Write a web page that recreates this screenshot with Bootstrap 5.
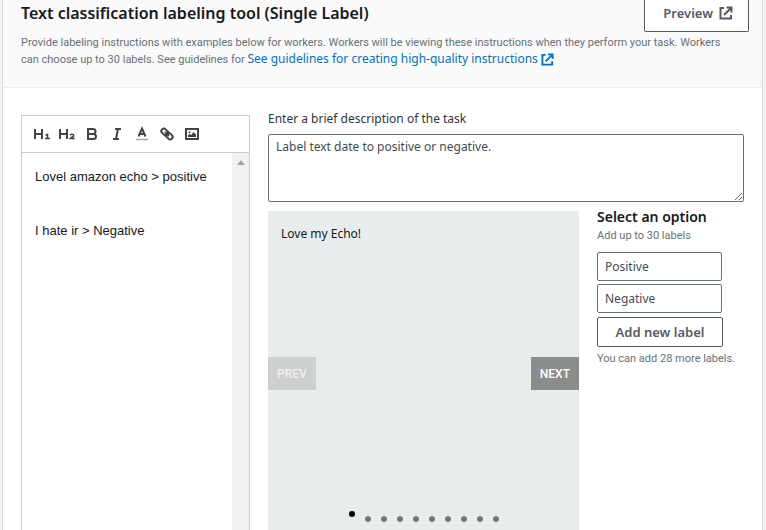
<!DOCTYPE html>
<html lang="en">
<head>
<meta charset="utf-8">
<meta name="viewport" content="width=device-width, initial-scale=1">
<title>Text classification labeling tool</title>
<link href="https://cdn.jsdelivr.net/npm/bootstrap@5.3.0/dist/css/bootstrap.min.css" rel="stylesheet">
<style>
  body { background: #f2f3f3; color: #16191f; font: 400 12px/18px "Noto Sans", sans-serif; }
  .panel { margin: 0 3px 0 2px; border: solid #d5dbdb; border-width: 0 1px; }
  .panel-head { background: #fafafa; border-bottom: 1px solid #eaeded; padding: 0 18px 19px; }
  .panel-head h1 { font-size: 16px; line-height: 24px; font-weight: 600; margin: 1px 0 9px; }
  .fine { font: 400 11px/17px Roboto, sans-serif; color: #687078; }
  .head-note { padding-right: 16px; }
  .head-note a { font: 400 12px/16px "Noto Sans", sans-serif; color: #0073bb; text-decoration: none; }
  .btn-outline { --bs-btn-color: #545b64; --bs-btn-border-color: #545b64; --bs-btn-bg: #fff; --bs-btn-hover-color: #16191f; --bs-btn-hover-border-color: #16191f; --bs-btn-hover-bg: #fafafa; --bs-btn-font-size: 13px; --bs-btn-font-weight: 600; --bs-btn-line-height: 18px; --bs-btn-border-radius: 2px; --bs-btn-padding-y: 5px; }
  .btn-preview { border-top: 0; margin-right: -5px; padding: 4px 15px 9px 18px; gap: 6px; border-radius: 0 0 2px 2px; }
  .panel-body { padding: 27px 18px 0; gap: 18px; }
  .editor { width: 229px; border: 1px solid #ccc; border-bottom: 0; }
  .tools { height: 37px; border-bottom: 1px solid #ccc; padding: 0 7px; }
  .tools button { width: 25px; height: 24px; padding: 3px; border: 0; background: none; color: #444; display: block; }
  .tools svg { display: block; margin: auto; }
  .doc { font: 400 13px/18px "Liberation Sans", Arial, sans-serif; padding: 15px 13px; color: #16191f; }
  .scroller { width: 17px; background: #f0f0f0; padding-top: 7px; }
  .task-label { line-height: 18px; margin-bottom: 6px; margin-top: -5px; color: #30353c; }
  .field { border: 1px solid #687078; border-radius: 2px; color: #444b52; background: #fff; font-size: 12px; line-height: 18px; padding: 3px 7px; display: block; width: 100%; }
  textarea.field { height: 68px; resize: vertical; }
  .labeling { margin-top: 9px; gap: 18px; }
  .slides { background: #e9eced; flex: 0 1 311px; padding-bottom: 8px; }
  .slides p { margin: 14px 13px 114px; color: #16191f; }
  .step { border: 0; border-radius: 0; background: #8b8d8d; color: #fff; font: 500 12px/18px Roboto, sans-serif; padding: 8px 9px 7px; }
  .step:disabled { background: #cecfcf; color: #eff0f0; }
  .dots { gap: 10px; }
  .dot { width: 6px; height: 6px; padding: 0; border: 0; border-radius: 50%; background: #757777; }
  .dot.active { background: #000; margin-bottom: 5px; }
  .options h2 { font-size: 14px; line-height: 18px; font-weight: 600; margin: -3px 0 1px; }
  .options .field { width: 125px; height: 29px; margin-bottom: 3px; }
  .btn-add { width: 126px; margin: 1px 0 3px; white-space: nowrap; }
</style>
</head>
<body>
<main class="panel bg-white min-vh-100 d-flex flex-column">
  <header class="panel-head">
    <div class="d-flex justify-content-between align-items-start">
      <h1>Text classification labeling tool (Single Label)</h1>
      <button type="button" class="btn btn-outline btn-preview d-flex align-items-center">Preview
        <svg width="14" height="14" viewBox="0 0 14 14" fill="none" stroke="currentColor" stroke-width="2" aria-hidden="true"><path d="M5 2H1.500v10.500H12V9M7.500 1.500h5v5M12.300 1.700 5 9"/></svg>
      </button>
    </div>
    <p class="fine head-note mb-0">Provide labeling instructions with examples below for workers. Workers will be viewing these instructions when they perform your task. Workers can choose up to 30 labels. See guidelines for <a href="#">See guidelines for creating high-quality instructions <svg width="13" height="13" viewBox="0 0 14 14" fill="none" stroke="currentColor" stroke-width="2" aria-hidden="true"><path d="M5 2H1.500v10.500H12V9M7.500 1.500h5v5M12.300 1.700 5 9"/></svg></a></p>
  </header>

  <div class="panel-body d-flex flex-grow-1">
    <section class="editor d-flex flex-column flex-shrink-0" aria-label="Instructions editor">
      <div class="tools d-flex align-items-center">
        <button type="button" aria-label="Heading 1"><svg width="18" height="18" viewBox="0 0 18 18" fill="none" stroke="currentColor" stroke-width="2"><path d="M2 4v10M9 4v10M2 9h7"/><path stroke-width="1.600" d="M14.500 14V9.500l-2 .8M12 13.500h5"/></svg></button>
        <button type="button" aria-label="Heading 2"><svg width="18" height="18" viewBox="0 0 18 18" fill="none" stroke="currentColor" stroke-width="2"><path d="M2 4v10M9 4v10M2 9h7"/><path stroke-width="1.600" d="M12 10.300c.6-1.500 3.700-1.300 3.700.4 0 1.200-2.700 1.700-3.400 2.800h4.400"/></svg></button>
        <button type="button" aria-label="Bold"><svg width="18" height="18" viewBox="0 0 18 18" fill="none" stroke="currentColor" stroke-width="2"><path d="M5 4h5a2.500 2.500 0 0 1 0 5H5zM5 9h5.500a2.500 2.500 0 0 1 0 5H5z"/></svg></button>
        <button type="button" aria-label="Italic"><svg width="18" height="18" viewBox="0 0 18 18" fill="none" stroke="currentColor" stroke-width="2"><path d="M7 4h6M5 14h6M10 4 8 14"/></svg></button>
        <button type="button" aria-label="Text color"><svg width="18" height="18" viewBox="0 0 18 18" fill="none" stroke="currentColor" stroke-width="2"><path stroke="#aaa" stroke-width="1.500" d="M3 14.500h12"/><path d="M5.500 11.500 9 3.500l3.500 8M6.500 9h5"/></svg></button>
        <button type="button" aria-label="Link"><svg width="18" height="18" viewBox="0 0 18 18" fill="none" stroke="currentColor" stroke-width="2"><rect x="3" y="4.500" width="7.500" height="5" rx="2.500" transform="rotate(45 6.750 7)"/><rect x="7.500" y="8.500" width="7.500" height="5" rx="2.500" transform="rotate(45 11.250 11)"/><path d="m7 7 4 4"/></svg></button>
        <button type="button" aria-label="Image"><svg width="18" height="18" viewBox="0 0 18 18" fill="none" stroke="currentColor" stroke-width="2"><rect x="3" y="4" width="12" height="10"/><circle cx="6.500" cy="7.300" r="1" fill="currentColor" stroke="none"/><path fill="currentColor" stroke="none" d="M5 12v-2l1.500-1 1.500 1 2.500-3L13 9.500V12z"/></svg></button>
      </div>
      <div class="d-flex flex-grow-1">
        <div class="doc flex-grow-1" contenteditable="true">
          <p class="mb-0">Lovel amazon echo &gt; positive</p>
          <p class="mb-0"><br></p>
          <p class="mb-0"><br></p>
          <p class="mb-0">I hate ir &gt; Negative</p>
        </div>
        <div class="scroller" aria-hidden="true"><svg class="d-block mx-auto" width="8" height="5" viewBox="0 0 8 5"><path fill="#a3a3a3" d="M0 5 4 0l4 5z"/></svg></div>
      </div>
    </section>

    <section class="flex-grow-1 d-flex flex-column">
      <label class="task-label" for="task">Enter a brief description of the task</label>
      <textarea class="field" id="task">Label text date to positive or negative.</textarea>
      <div class="labeling d-flex flex-grow-1">
        <div class="slides d-flex flex-column">
          <p>Love my Echo!</p>
          <div class="d-flex justify-content-between">
            <button type="button" class="step" disabled>PREV</button>
            <button type="button" class="step">NEXT</button>
          </div>
          <div class="dots d-flex justify-content-center align-items-end mt-auto">
            <button type="button" class="dot active" aria-label="Slide 1"></button>
            <button type="button" class="dot" aria-label="Slide 2"></button>
            <button type="button" class="dot" aria-label="Slide 3"></button>
            <button type="button" class="dot" aria-label="Slide 4"></button>
            <button type="button" class="dot" aria-label="Slide 5"></button>
            <button type="button" class="dot" aria-label="Slide 6"></button>
            <button type="button" class="dot" aria-label="Slide 7"></button>
            <button type="button" class="dot" aria-label="Slide 8"></button>
            <button type="button" class="dot" aria-label="Slide 9"></button>
            <button type="button" class="dot" aria-label="Slide 10"></button>
          </div>
        </div>
        <div class="options">
          <h2>Select an option</h2>
          <p class="fine mb-2">Add up to 30 labels</p>
          <input class="field" type="text" value="Positive" aria-label="Label 1">
          <input class="field" type="text" value="Negative" aria-label="Label 2">
          <button type="button" class="btn btn-outline btn-add">Add new label</button>
          <p class="fine mb-0">You can add 28 more labels.</p>
        </div>
      </div>
    </section>
  </div>
</main>
<script src="https://cdn.jsdelivr.net/npm/bootstrap@5.3.0/dist/js/bootstrap.bundle.min.js"></script>
</body>
</html>
